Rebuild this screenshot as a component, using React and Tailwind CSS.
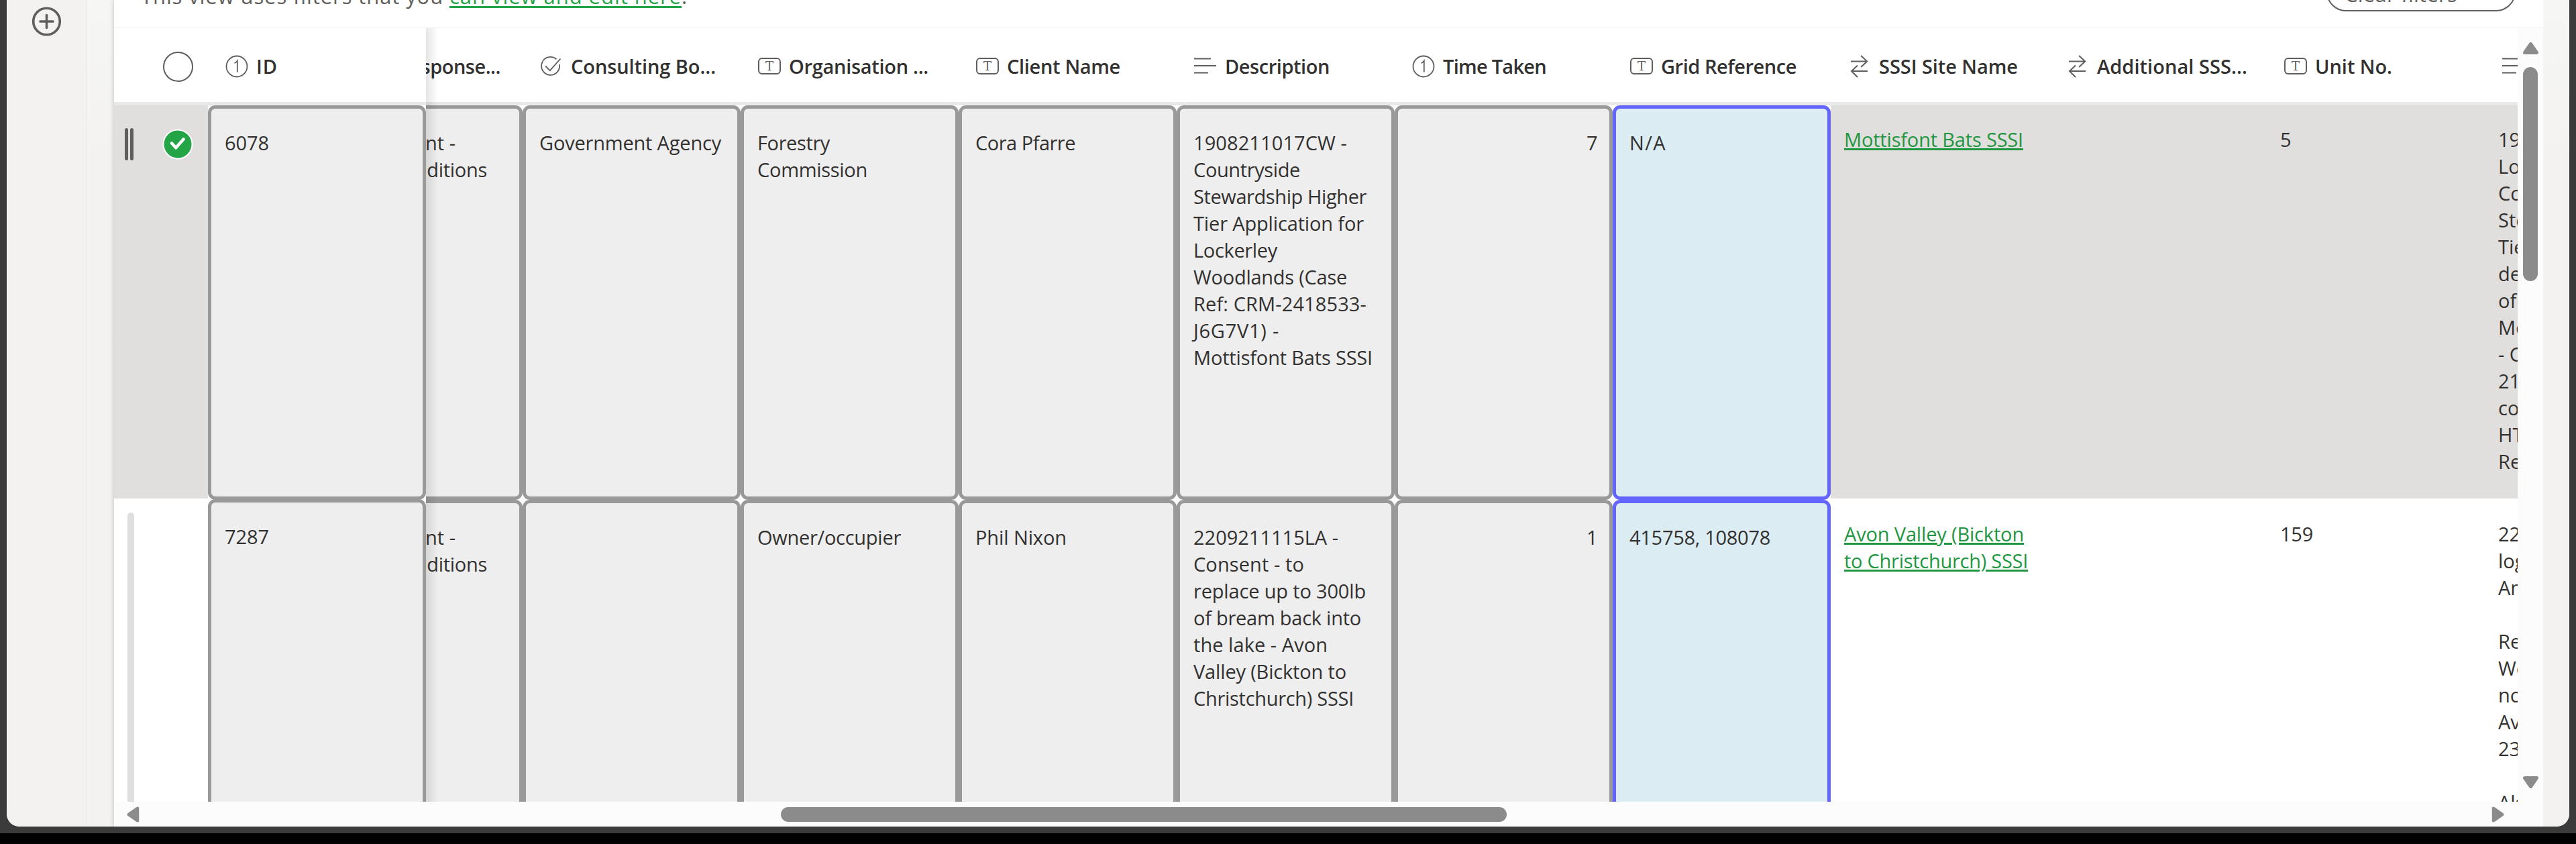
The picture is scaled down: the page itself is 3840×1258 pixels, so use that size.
import { useLayoutEffect, useRef, useState } from "react";

/* A single line of text whose tracking is adjusted to fill the given width. */
function Line({ w, children, className = "" }) {
  const ref = useRef(null);
  const [spacing, setSpacing] = useState(0);
  useLayoutEffect(() => {
    if (!w || !ref.current) return;
    const natural = ref.current.getBoundingClientRect().width;
    setSpacing((w - natural) / String(children).length);
  }, []);
  return (
    <div className="whitespace-pre">
      <span ref={ref} className={className} style={{ letterSpacing: spacing + "px" }}>
        {children}
      </span>
    </div>
  );
}

function NumberIcon() {
  return (
    <svg width="34" height="34" viewBox="0 0 34 34" fill="none" stroke="#605e5c" strokeWidth="1.8">
      <circle cx="17" cy="17" r="15.5" />
      <path d="M13.6 12.2c1.8-.8 3.2-2 4.200-3.400v16.700" />
    </svg>
  );
}

function TextIcon() {
  return (
    <span className="flex h-[25px] w-[34px] items-center justify-center rounded-[6px] border-2 border-[#605e5c] font-['DejaVu_Serif',serif] text-[18px] leading-none font-normal text-[#605e5c]">
      T
    </span>
  );
}

function ChoiceIcon() {
  return (
    <svg width="34" height="34" viewBox="0 0 34 34" fill="none" stroke="#605e5c" strokeWidth="1.8">
      <path d="M24.500 6.200A13.500 13.500 0 1 0 28.900 14" />
      <path d="M8.200 16.500l6.600 6.600L30.500 5.500" />
    </svg>
  );
}

function LinesIcon() {
  return (
    <svg width="34" height="34" viewBox="0 0 34 34" fill="none" stroke="#605e5c" strokeWidth="2">
      <path d="M0 5.500h25M0 16h33M0 26.500h21" />
    </svg>
  );
}

function LookupIcon() {
  return (
    <svg width="34" height="34" viewBox="0 0 34 34" fill="none" stroke="#605e5c" strokeWidth="2">
      <path d="M4 9.500h24M19.200 1l9 8.500-9 8.500" />
      <path d="M29 24H5M14 15.500L5 24l9 9" />
    </svg>
  );
}

const icons = {
  number: NumberIcon,
  text: TextIcon,
  choice: ChoiceIcon,
  lines: LinesIcon,
  lookup: LookupIcon,
};

function HeadCell({ icon, label, w }) {
  const Icon = icons[icon];
  return (
    <div className="flex h-full w-[325px] shrink-0 items-center gap-3 pl-[26px]">
      <span className="flex w-[34px] shrink-0 justify-center">
        <Icon />
      </span>
      <Line w={w} className="font-semibold">
        {label}
      </Line>
    </div>
  );
}

function BoxCell({ lines = [], blue, right }) {
  return (
    <div
      className={`h-[588px] w-[325px] shrink-0 rounded-[11px] border-[5px] pt-[31px] pr-[18px] pl-5 ${
        blue ? "border-[#6464fe] bg-[#dcecf3]" : "border-[#999999] bg-[#eeeeee]"
      } ${right ? "text-right" : ""}`}
    >
      {lines.map(([t, w]) => (
        <Line key={t} w={w}>
          {t}
        </Line>
      ))}
    </div>
  );
}

function PlainCell({ lines = [], link, selected }) {
  return (
    <div
      className={`h-[586px] w-[325px] shrink-0 overflow-hidden pt-[31px] pl-5 ${
        selected ? "bg-[#e1dfdd]" : "bg-white"
      }`}
    >
      {lines.map(([t, w], i) =>
        t ? (
          <Line
            key={i}
            w={w}
            className={
              link ? "text-[#1f9640] underline decoration-[3px] underline-offset-[2px]" : ""
            }
          >
            {t}
          </Line>
        ) : (
          <div key={i} className="h-10" />
        )
      )}
    </div>
  );
}

/* The column that is partly scrolled under the frozen ID column. */
function ResponseCell() {
  return (
    <div className="h-[588px] w-[325px] shrink-0 rounded-[11px] border-[5px] border-[#999999] bg-[#eeeeee] pt-[31px] pl-[19px] whitespace-nowrap">
      <div className="w-[201px] text-right">Consent -</div>
      <div className="w-[248px] text-right tracking-[-0.3px]">with conditions</div>
    </div>
  );
}

const headers = [
  { icon: "choice", label: "Consulting Bo...", w: 216 },
  { icon: "text", label: "Organisation ...", w: 208 },
  { icon: "text", label: "Client Name", w: 169 },
  { icon: "lines", label: "Description", w: 156 },
  { icon: "number", label: "Time Taken", w: 154 },
  { icon: "text", label: "Grid Reference", w: 202 },
  { icon: "lookup", label: "SSSI Site Name", w: 207 },
  { icon: "lookup", label: "Additional SSS...", w: 224 },
  { icon: "text", label: "Unit No.", w: 115 },
  { icon: "lines", label: "Comments", w: 150 },
];

const rows = [
  {
    selected: true,
    body: [["Government Agency", 271]],
    org: [["Forestry", 108], ["Commission", 164]],
    client: [["Cora Pfarre", 149]],
    desc: [
      ["1908211017CW -", 229],
      ["Countryside", 159],
      ["Stewardship Higher", 258],
      ["Tier Application for", 254],
      ["Lockerley", 125],
      ["Woodlands (Case", 229],
      ["Ref: CRM-2418533-", 258],
      ["J6G7V1) -", 128],
      ["Mottisfont Bats SSSI", 267],
    ],
    time: [["7", 16]],
    grid: [["N/A", 55]],
    site: [["Mottisfont Bats SSSI", 267]],
    unit: [["5", 16]],
    notes: [
      ["1908", 66], ["Lock"], ["Coun"], ["Stew"], ["Tier"], ["deta"], ["of th"], ["Mott"],
      ["- CR"], ["2118", 66], ["cons"], ["HT"], ["Ref"],
    ],
  },
  {
    selected: false,
    body: [],
    org: [["Owner/occupier", 214]],
    client: [["Phil Nixon", 136]],
    desc: [
      ["2209211115LA -", 216],
      ["Consent - to", 165],
      ["replace up to 300lb", 257],
      ["of bream back into", 250],
      ["the lake - Avon", 200],
      ["Valley (Bickton to", 228],
      ["Christchurch) SSSI", 239],
    ],
    time: [["1", 16]],
    grid: [["415758, 108078", 210]],
    site: [["Avon Valley (Bickton", 268], ["to Christchurch) SSSI", 274]],
    unit: [["159", 49]],
    notes: [
      ["2209", 66], ["logg"], ["Ann"], [""], ["Resp"], ["Wei"], ["note"], ["Avon"], ["2309", 66], [""], ["Also"],
    ],
  },
];

function Arrow({ className = "" }) {
  return (
    <svg width="23" height="18" viewBox="0 0 23 18" className={`shrink-0 ${className}`}>
      <path
        d="M11.500 2.500L20.500 15.500H2.500Z"
        fill="#8b8b8b"
        stroke="#8b8b8b"
        strokeWidth="5"
        strokeLinejoin="round"
      />
    </svg>
  );
}

function FrozenColumns() {
  return (
    <div className="h-full w-[465px] shrink-0 bg-white">
      <div className="flex h-[115px] items-center border-b-[5px] border-[#e9e9e9]">
        <div className="flex w-[140px] shrink-0 justify-end pr-[22px]">
          <div className="mt-[4px] h-[45px] w-[45px] rounded-full border-2 border-[#605e5c]" />
        </div>
        <div className="h-full pt-[3px]">
          <HeadCell icon="number" label="ID" w={32} />
        </div>
      </div>
      <div className="flex h-[587px]">
        <div className="flex h-[586px] w-[140px] shrink-0 bg-[#e1dfdd] pt-[34px] pl-[16px]">
          <div className="flex h-[48px] w-[13px] justify-between">
            <div className="h-full w-[5px] rounded-full bg-[#605e5c]" />
            <div className="h-full w-[5px] rounded-full bg-[#605e5c]" />
          </div>
          <svg width="46" height="46" viewBox="0 0 46 46" className="mt-px ml-[43px]">
            <circle cx="23" cy="23" r="21.500" fill="#23a447" stroke="#fff" strokeWidth="2" />
            <path
              d="M14 21.500l6.200 6.800L31.500 15.500"
              fill="none"
              stroke="#fff"
              strokeWidth="4.500"
              strokeLinecap="round"
              strokeLinejoin="round"
            />
          </svg>
        </div>
        <BoxCell lines={[["6078", 66]]} />
      </div>
      <div className="flex h-[588px]">
        <div className="w-[140px] shrink-0 pt-[20px] pl-[20px]">
          <div className="h-full w-[10px] rounded-full bg-[#e1dfdd]" />
        </div>
        <BoxCell lines={[["7287", 66]]} />
      </div>
    </div>
  );
}

function ScrollingColumns() {
  return (
    <div className="relative h-full w-[3118px] shrink-0 overflow-hidden bg-white">
      <div className="ml-[-181px] w-[3575px]">
        <div className="flex h-[115px] border-b-[5px] border-[#e9e9e9] pt-[3px]">
          <div className="flex h-full w-[325px] shrink-0 items-center justify-end pr-[33px] font-semibold tracking-[-0.5px]">
            Response...
          </div>
          {headers.map((h) => (
            <HeadCell key={h.label} {...h} />
          ))}
        </div>
        {rows.map((r, i) => (
          <div key={i} className="flex h-[588px]">
            <ResponseCell />
            <BoxCell lines={r.body} />
            <BoxCell lines={r.org} />
            <BoxCell lines={r.client} />
            <BoxCell lines={r.desc} />
            <BoxCell lines={r.time} right />
            <BoxCell lines={r.grid} blue />
            <PlainCell lines={r.site} link selected={r.selected} />
            <PlainCell selected={r.selected} />
            <PlainCell lines={r.unit} selected={r.selected} />
            <PlainCell lines={r.notes} selected={r.selected} />
          </div>
        ))}
      </div>
      <div className="absolute inset-y-0 left-0 w-[18px] bg-gradient-to-r from-black/10 to-transparent" />
    </div>
  );
}

export default function App() {
  return (
    <div className="h-[1258px] w-[3840px] overflow-hidden bg-black font-['Open_Sans','Noto_Sans',sans-serif] text-[29px] leading-10 text-[#323130]">
      <div className="h-[1242px] bg-[#3b3b3b] pr-[10px] pb-[10px] pl-[10px]">
        <div className="flex h-[1232px] overflow-hidden rounded-b-[19px] bg-[#f3f2f0]">
          <div className="flex w-[120px] shrink-0 flex-col items-center border-r border-[#e9e8e6] bg-[#f3f2f0] pt-[10px]">
            <svg width="44" height="44" viewBox="0 0 44 44" fill="none" stroke="#605e5c" strokeWidth="3.600">
              <circle cx="21.500" cy="22" r="19.800" />
              <path d="M21.500 12.500v19M12 22h19" strokeLinecap="round" />
            </svg>
          </div>
          <div className="w-[40px] shrink-0 bg-gradient-to-b from-[#f6f6f5] to-[#f3f2f0] to-20%" />
          <div className="flex w-[3621px] shrink-0 flex-col bg-white shadow-[0_0_7px_rgba(0,0,0,0.22)]">
            <div className="flex h-[42px] shrink-0 items-end justify-between overflow-hidden border-b-2 border-[#f7f7f7] pr-[41px] pl-[40px] text-[#605e5c]">
              <div className="flex pb-[26px] text-[31px]">
                <Line w={460}>{"This view uses filters that you "}</Line>
                <Line
                  w={346}
                  className="text-[#22a447] underline decoration-[3px] underline-offset-[3px]"
                >
                  can view and edit here
                </Line>
                <span>.</span>
              </div>
              <div className="mb-[23px] flex h-[58px] w-[282px] items-end rounded-full border-2 border-[#605e5c] pb-[4px] pl-[25px] text-[31px]">
                <Line w={168}>Clear filters</Line>
              </div>
            </div>
            <div className="flex min-h-0 flex-1">
              <div className="flex w-[3583px] shrink-0 flex-col">
                <div className="flex h-[1153px] shrink-0 overflow-hidden">
                  <FrozenColumns />
                  <ScrollingColumns />
                </div>
                <div className="flex h-[37px] items-center bg-[#fcfcfc] pr-[18px] pl-[17px]">
                  <Arrow className="-rotate-90" />
                  <div className="ml-[954px] h-[22px] w-[1082px] rounded-full bg-[#8b8b8b]" />
                  <Arrow className="ml-auto rotate-90" />
                </div>
              </div>
              <div className="flex flex-1 flex-col items-center bg-[#fcfcfc] pt-[21px] pb-[57px]">
                <Arrow />
                <div className="mt-[19px] h-[319px] w-[22px] rounded-full bg-[#8b8b8b]" />
                <Arrow className="mt-auto rotate-180" />
              </div>
            </div>
          </div>
          <div className="flex-1 bg-gradient-to-b from-[#f6f6f5] to-[#f3f2f0] to-20%" />
        </div>
      </div>
    </div>
  );
}
